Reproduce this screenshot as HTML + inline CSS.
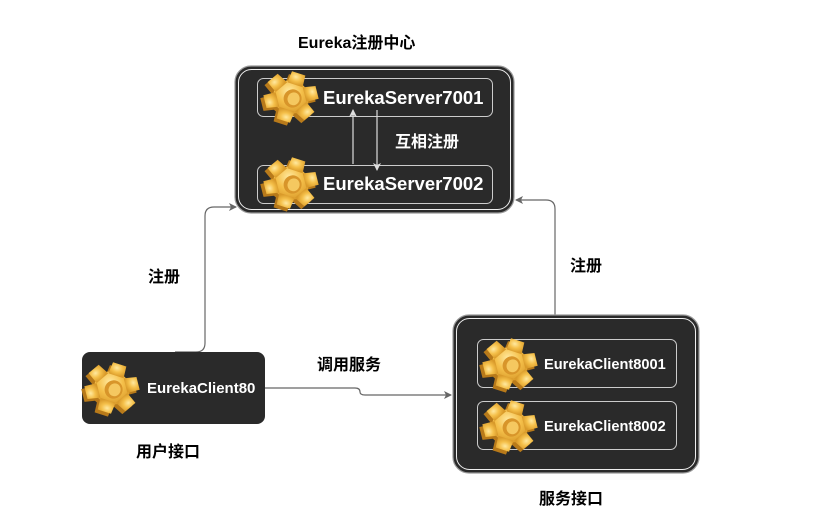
<!DOCTYPE html>
<html><head><meta charset="utf-8"><style>
html,body{margin:0;padding:0;background:#fff;width:820px;height:529px;overflow:hidden}
text{font-family:"Liberation Sans","Noto Sans CJK SC",sans-serif;font-weight:bold}
</style></head><body>
<svg width="820" height="529" xmlns="http://www.w3.org/2000/svg">
<defs>
<radialGradient id="gg" cx="0.4" cy="0.35" r="0.7">
<stop offset="0" stop-color="#ffe9a0"/><stop offset="0.5" stop-color="#f5c04a"/><stop offset="1" stop-color="#d99a2a"/>
</radialGradient>
<g id="teeth">
<circle r="18"/>
<path d="M-7,-27 L7,-27 L8,-14 L-8,-14z"/>
<path d="M-7,-27 L7,-27 L8,-14 L-8,-14z" transform="rotate(60)"/>
<path d="M-7,-27 L7,-27 L8,-14 L-8,-14z" transform="rotate(120)"/>
<path d="M-7,-27 L7,-27 L8,-14 L-8,-14z" transform="rotate(180)"/>
<path d="M-7,-27 L7,-27 L8,-14 L-8,-14z" transform="rotate(240)"/>
<path d="M-7,-27 L7,-27 L8,-14 L-8,-14z" transform="rotate(300)"/>
</g>
<g id="gear">
<g transform="rotate(18) scale(1,0.92)">
<use href="#teeth" x="-2" y="4" fill="#b87a1a"/>
<use href="#teeth" fill="url(#gg)"/>
<ellipse cx="2" cy="1" rx="9" ry="10" fill="#d8952a"/>
<ellipse cx="3" cy="1" rx="6" ry="7" fill="#f5c860"/>
</g>
</g>
<marker id="ah" markerWidth="8" markerHeight="8" refX="7" refY="4" orient="auto" markerUnits="userSpaceOnUse">
<path d="M0,0 L8,4 L0,8 L2,4 z" fill="#666"/></marker>
<marker id="aw" markerWidth="8" markerHeight="8" refX="7" refY="4" orient="auto" markerUnits="userSpaceOnUse">
<path d="M0,0 L8,4 L0,8 L2,4 z" fill="#ddd"/></marker>
</defs>

<path d="M175,352 L196,352 Q205,352 205,343 L205,216 Q205,207 214,207 L236,207" fill="none" stroke="#666" stroke-width="1.2" marker-end="url(#ah)"/>
<path d="M555,315 L555,209 Q555,200 546,200 L516,200" fill="none" stroke="#666" stroke-width="1.2" marker-end="url(#ah)"/>
<path d="M265,388 L355,388 Q360,388 360,392 Q360,395 365,395 L451,395" fill="none" stroke="#666" stroke-width="1.2" marker-end="url(#ah)"/>

<rect x="235" y="66" width="279" height="147" rx="16" fill="#2a2a2a" stroke="#999" stroke-width="1.2"/>
<rect x="238.5" y="69.5" width="272" height="140" rx="13" fill="none" stroke="#eee" stroke-width="1"/>
<rect x="257.5" y="78.5" width="235" height="38" rx="6" fill="#2a2a2a" stroke="#ccc" stroke-width="1"/>
<rect x="257.5" y="165.5" width="235" height="38" rx="6" fill="#2a2a2a" stroke="#ccc" stroke-width="1"/>
<use href="#gear" x="291" y="97"/>
<use href="#gear" x="291" y="183"/>
<text x="323" y="104" fill="#fff" font-size="18.5">EurekaServer7001</text>
<text x="323" y="190" fill="#fff" font-size="18.5">EurekaServer7002</text>
<path d="M353,164 L353,110" stroke="#ddd" stroke-width="1.2" marker-end="url(#aw)"/>
<path d="M377,110 L377,170" stroke="#ddd" stroke-width="1.2" marker-end="url(#aw)"/>
<text x="395" y="147" fill="#fff" font-size="16">互相注册</text>

<rect x="82" y="352" width="183" height="72" rx="8" fill="#2a2a2a"/>
<use href="#gear" x="112" y="388"/>
<text x="147" y="393" fill="#fff" font-size="15">EurekaClient80</text>

<rect x="453" y="315" width="246" height="158" rx="16" fill="#2a2a2a" stroke="#999" stroke-width="1.2"/>
<rect x="456.5" y="318.5" width="239" height="151" rx="13" fill="none" stroke="#eee" stroke-width="1"/>
<rect x="477.5" y="339.5" width="199" height="48" rx="6" fill="#2a2a2a" stroke="#ccc" stroke-width="1"/>
<rect x="477.5" y="401.5" width="199" height="48" rx="6" fill="#2a2a2a" stroke="#ccc" stroke-width="1"/>
<use href="#gear" x="510" y="364"/>
<use href="#gear" x="510" y="426"/>
<text x="544" y="369" fill="#fff" font-size="14.6">EurekaClient8001</text>
<text x="544" y="431" fill="#fff" font-size="14.6">EurekaClient8002</text>

<text x="298" y="48" fill="#000" font-size="16">Eureka注册中心</text>
<text x="148" y="282" fill="#000" font-size="16">注册</text>
<text x="570" y="271" fill="#000" font-size="16">注册</text>
<text x="317" y="370" fill="#000" font-size="16">调用服务</text>
<text x="136" y="457" fill="#000" font-size="16">用户接口</text>
<text x="539" y="504" fill="#000" font-size="16">服务接口</text>
</svg>
</body></html>
